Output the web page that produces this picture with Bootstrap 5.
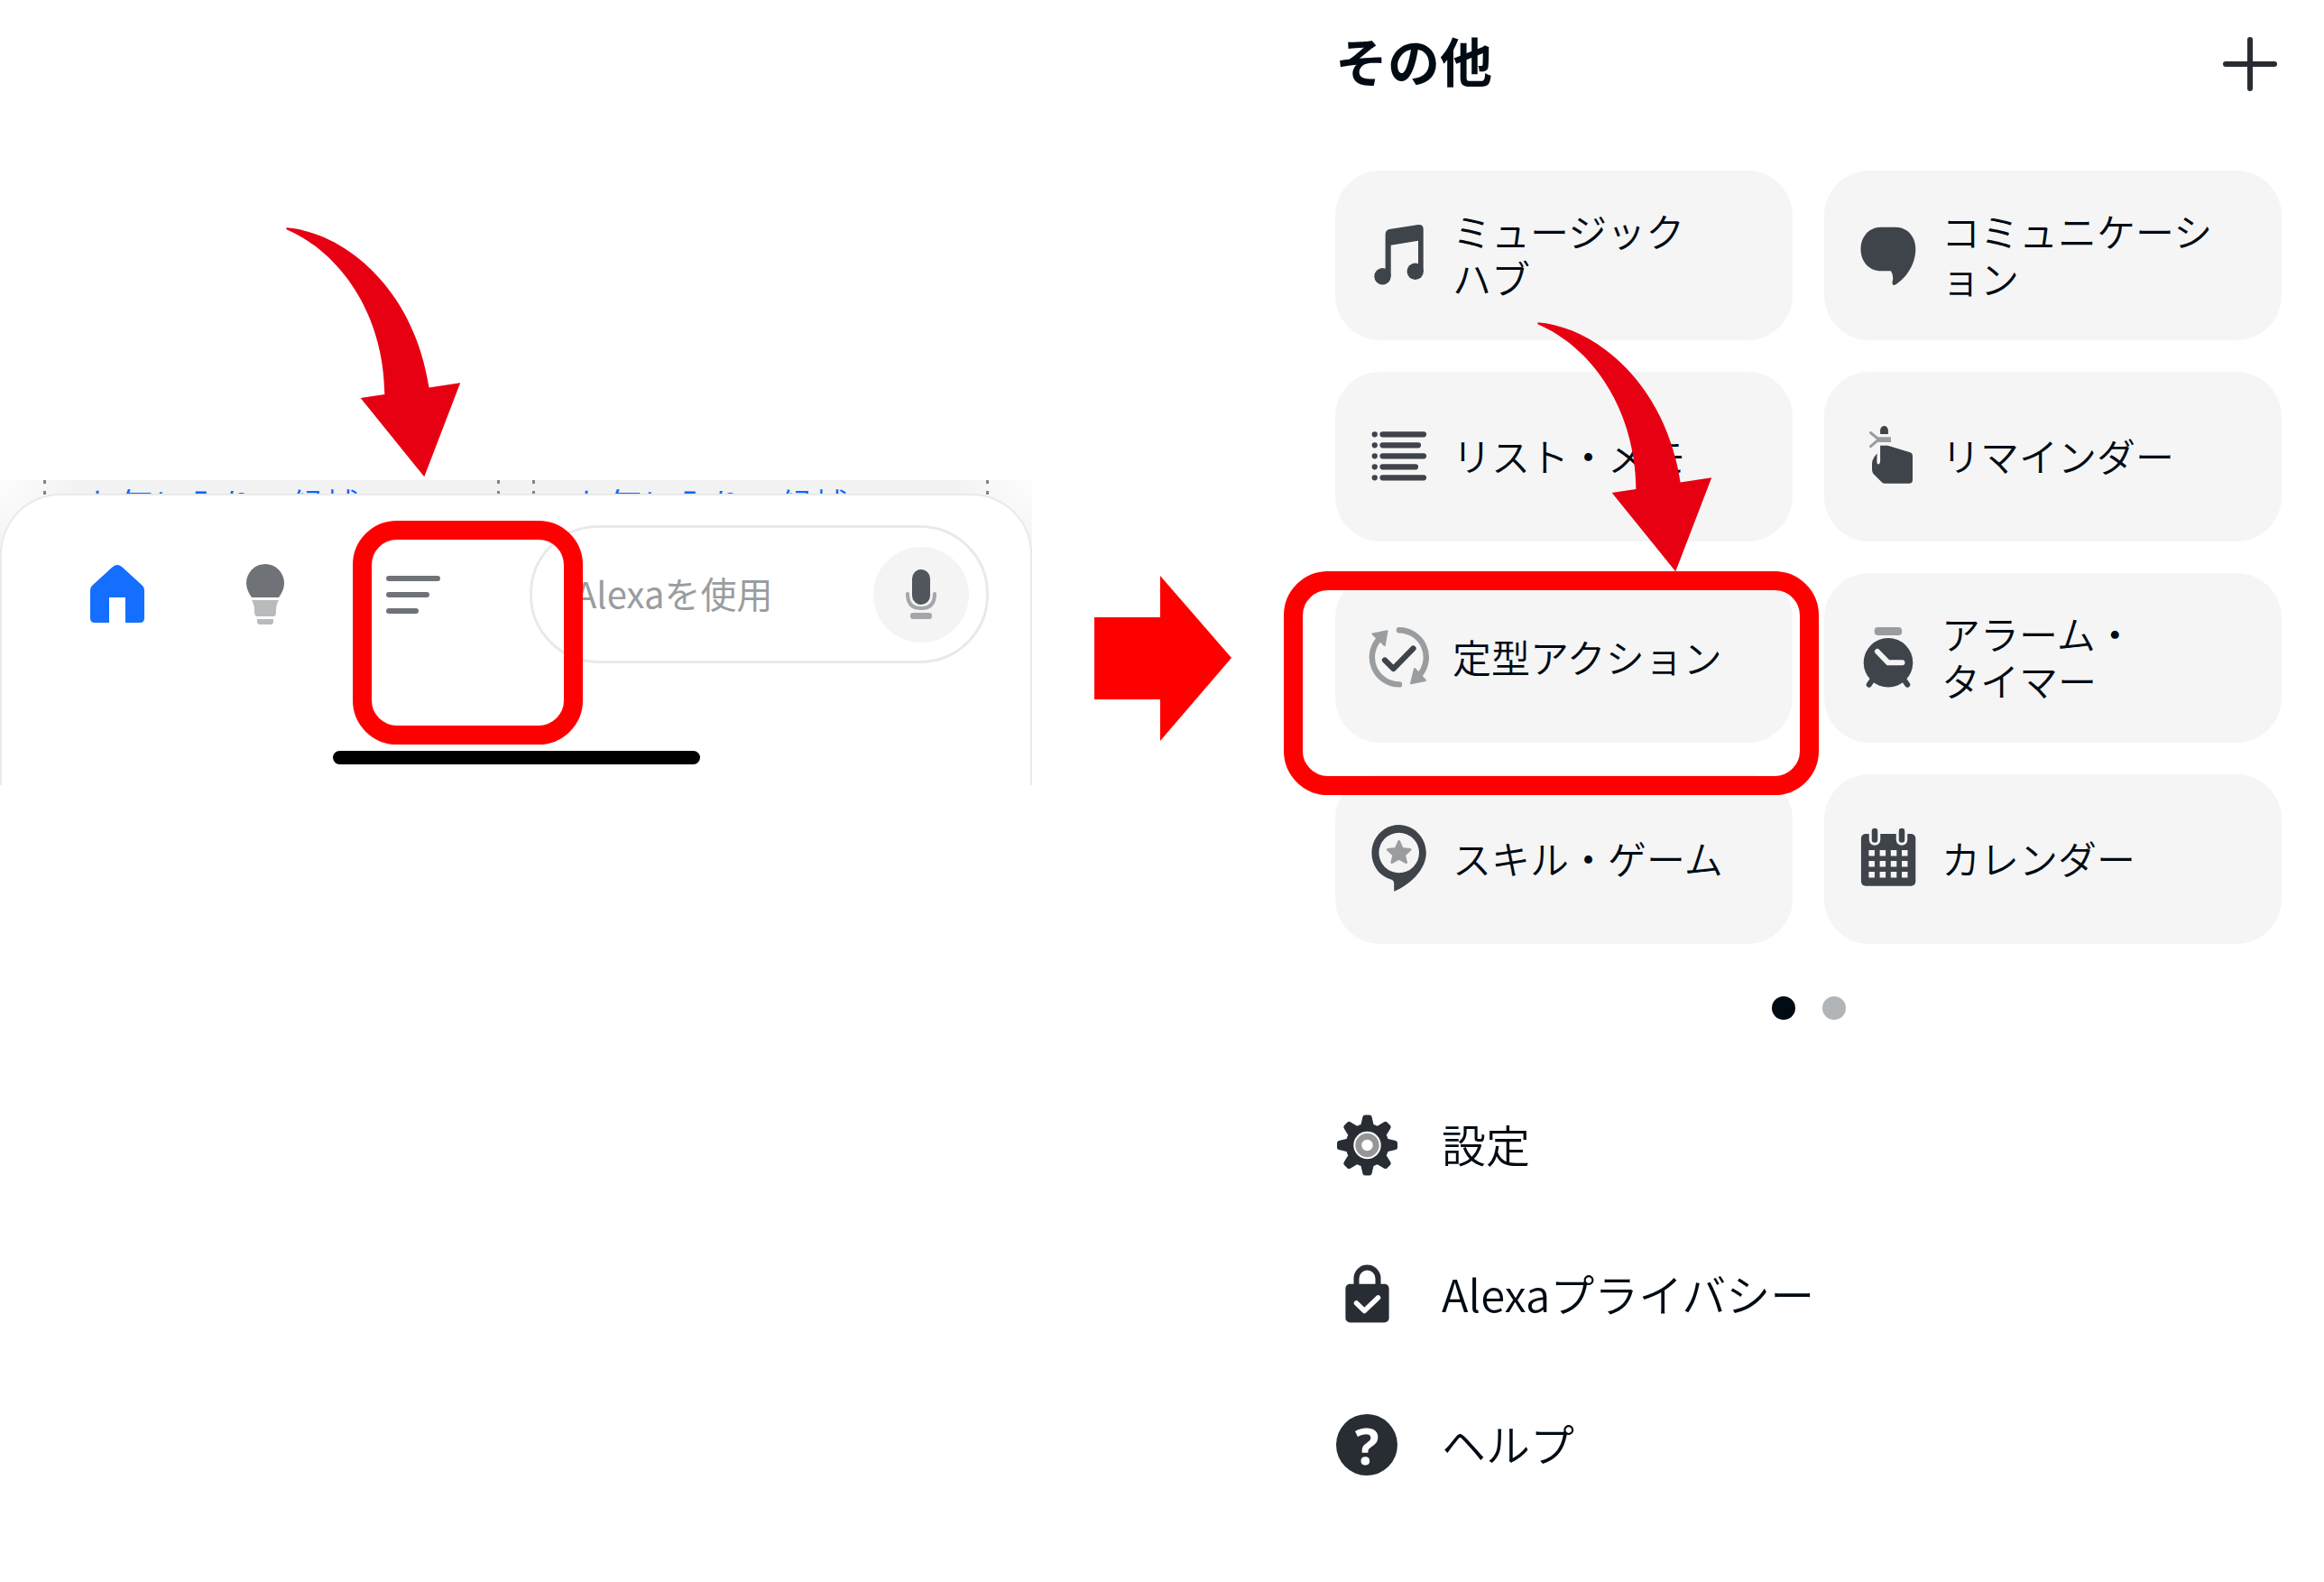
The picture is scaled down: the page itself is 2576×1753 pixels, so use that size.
<!DOCTYPE html>
<html lang="ja">
<head>
<meta charset="utf-8">
<meta name="viewport" content="width=device-width, initial-scale=1">
<title>Alexaアプリ その他メニュー</title>
<link href="https://cdn.jsdelivr.net/npm/bootstrap@5.3.0/dist/css/bootstrap.min.css" rel="stylesheet">
<style>
  body { font-family: "Noto Sans CJK JP", "Noto Sans", sans-serif; font-weight: 350; color: #000b14; background: #fff; overflow-x: hidden; }
  svg { overflow: visible; flex: none; display: block; }
  .guide { display: grid; grid-template-columns: minmax(0, 1144fr) minmax(0, 290fr) minmax(0, 1142fr); }

  /* bottom bar of the app */
  .step-home { padding-top: 532px; }
  .backdrop-cards { height: 82px; overflow: hidden; padding: 0 48px; gap: 36px;
    background: radial-gradient(circle at 0 0, #fdfdfd 0, #f2f2f2 90px, transparent 91px), radial-gradient(circle at 100% 0, #fdfdfd 0, #f2f2f2 90px, transparent 91px), #f2f2f2; }
  .ghost-card { flex: 1 1 0; min-width: 0; padding: 7px 0 0 46px; font-size: 38px; line-height: 38px; color: #0a66ff; white-space: nowrap;
    background: linear-gradient(#808488 4px, transparent 4px) left top / 3px 12px repeat-y, linear-gradient(#808488 4px, transparent 4px) right top / 3px 12px repeat-y; }
  .tab-sheet { margin-top: -67px; height: 323px; padding: 33px 46px 0; background: #fff; border: 2px solid #e8eaea; border-bottom: 0; border-radius: 67px 67px 0 0; }
  .tab-btn { width: 164px; height: 153px; border: 0; background: none; padding: 0; }
  .ask-box { margin-left: 47px; height: 153px; border: 3px solid #e8eaea; border-radius: 76px; padding: 0 19px 0 47px; min-width: 0; }
  .ask-box input { width: 0; border: 0; outline: 0; background: none; font-size: 40px; font-weight: 400; line-height: 60px; min-width: 0; padding: 0 0 4px; }
  .ask-box input::placeholder { color: #999da0; opacity: 1; }
  .mic-btn { width: 106px; height: 106px; background: #f4f4f4; border: 0; padding: 0; flex: none; }
  .home-bar { width: 407px; height: 15px; margin-top: 97px; background: #000; }

  /* red marks */
  .red-frame { position: absolute; border: 21px solid #f00; border-radius: 49px; pointer-events: none; }
  .frame-menu { left: 15px; top: -5px; width: 255px; height: 248px; }
  .frame-routine { left: -57px; right: -29px; top: -2px; height: 248px; }
  .red-swoop { position: absolute; width: 194px; height: 277px; pointer-events: none; }
  .swoop-menu { left: -59px; top: -330px; }
  .swoop-routine { left: 224px; top: -278px; }
  .next-arrow { padding-top: 638px; }

  /* "more" screen */
  .step-more { padding: 0 47px 0 46px; }
  .more-head { height: 141px; margin-bottom: 48px; }
  .more-head h1 { font-size: 58px; line-height: 84px; font-weight: 700; padding-bottom: 10px; }
  .tile-grid { display: grid; grid-template-columns: 1fr 1fr; gap: 35px; }
  .tile { min-height: 188px; padding-left: 36px; gap: 24px; background: #f5f5f5; border-radius: 50px; font-size: 43px; line-height: 52px; color: inherit; white-space: nowrap; }
  .item-label { padding-bottom: 5px; }
  .pager { margin: 58px 0 56px; gap: 30px; }
  .pager button { width: 26px; height: 26px; border: 0; padding: 0; background: #b1b5b8; }
  .pager .current { background: #000b14; }
  .menu-row { height: 166px; gap: 48px; font-size: 49px; line-height: 60px; color: inherit; }
  .help-mark { width: 68px; height: 68px; margin: 0 1px; background: #282d33; color: #fff; font: 700 56px/68px "Noto Sans", sans-serif; }
  .ink { fill: #3f434a; } .ink-line { stroke: #3f434a; fill: none; stroke-linecap: round; stroke-linejoin: round; }
  .ash { fill: #999da0; } .ash-line { stroke: #999da0; fill: none; stroke-linecap: round; stroke-linejoin: round; }
</style>
</head>
<body>
<svg width="0" height="0" class="position-absolute" aria-hidden="true">
  <defs>
    <symbol id="swoop" viewBox="110 92 582 832"><path fill="#e60012" d="M111 93C300 108 535 290 586 625L690 609L570 922L358 660L438 648C436 380 290 175 111 99Z"/></symbol>
    <path id="tooth" d="M28 14L30.5 3.5Q31 1.5 33 1.5H38Q40 1.5 40.5 3.5L43 14Z"/>
  </defs>
</svg>
<main class="guide">
  <section class="step-home">
    <div class="backdrop-cards d-flex">
      <div class="ghost-card">お気に入りの候補</div>
      <div class="ghost-card">お気に入りの候補</div>
    </div>
    <nav class="tab-sheet position-relative">
      <div class="d-flex align-items-center">
        <button class="tab-btn d-flex align-items-center justify-content-center" aria-label="ホーム">
          <svg width="62" height="68" viewBox="0 0 62 68"><path fill="#146eff" d="M1 29Q1 26 3 24L26 3Q31 -1 36 3L59 24Q61 26 61 29V60Q61 65 56 65H40V37H22V65H6Q1 65 1 60Z"/></svg>
        </button>
        <button class="tab-btn d-flex align-items-center justify-content-center" aria-label="デバイス">
          <svg width="42" height="68" viewBox="0 0 42 68"><path fill="#6f7378" d="M6 37Q0 29 0 21A21 21 0 0 1 42 21Q42 29 36 37Z"/><path fill="#b8babc" d="M6 40H36Q33 45 33 52Q33 58 30 58H12Q9 58 9 52Q9 45 6 40ZM12 61H30V64Q30 67 27 67H15Q12 67 12 64Z"/></svg>
        </button>
        <div class="position-relative z-2">
          <button class="tab-btn d-flex align-items-center justify-content-center" aria-label="その他">
            <svg width="60" height="44" viewBox="0 0 60 44"><path stroke="#6f7378" stroke-width="6" stroke-linecap="round" d="M3 4H57M3 22H45M3 40H33"/></svg>
          </button>
          <div class="red-frame frame-menu"></div>
          <svg class="red-swoop swoop-menu"><use href="#swoop"/></svg>
        </div>
        <div class="ask-box flex-fill d-flex align-items-center">
          <input class="flex-fill" type="text" aria-label="Alexaを使用" placeholder="Alexaを使用">
          <button class="mic-btn rounded-circle d-flex align-items-center justify-content-center" aria-label="音声入力">
            <svg width="34" height="56" viewBox="0 0 34 56"><rect x="7" y="0" width="20" height="39" rx="10" fill="#52565d"/><path d="M2 27Q2 43 17 43T32 27" fill="none" stroke="#a4a6aa" stroke-width="4" stroke-linecap="round"/><rect x="5" y="48" width="24" height="7" rx="3" fill="#a4a6aa"/></svg>
          </button>
        </div>
      </div>
      <div class="home-bar rounded-pill mx-auto"></div>
    </nav>
  </section>

  <div class="next-arrow d-flex justify-content-center">
    <svg width="152" height="183" viewBox="0 0 152 183"><path fill="#f00" d="M0 46H73V0L152 91L73 183V137H0Z"/></svg>
  </div>

  <section class="step-more">
    <header class="more-head d-flex align-items-center justify-content-between">
      <h1 class="m-0">その他</h1>
      <button class="btn border-0 p-0 me-1" aria-label="追加">
        <svg width="62" height="60" viewBox="0 0 62 60"><path stroke="#282d33" stroke-width="6" stroke-linecap="round" d="M31 3V57M4 30H58"/></svg>
      </button>
    </header>

    <div class="tile-grid">
      <a href="#" class="tile d-flex align-items-center text-decoration-none">
        <svg width="70" height="70" viewBox="0 0 70 70" class="ink"><path d="M19.600 58V12Q19.600 7 24 6L56 1Q61.700 .5 61.700 6V53H56V18.700L25.700 23.700V58Z"/><circle cx="16.500" cy="58.300" r="9.200"/><circle cx="52.700" cy="52.700" r="9.200"/></svg>
        <span class="item-label">ミュージック<br>ハブ</span>
      </a>
      <a href="#" class="tile d-flex align-items-center text-decoration-none">
        <svg width="70" height="70" viewBox="0 0 70 70" class="ink"><path d="M27 3.700H43C56 3.700 65.300 14 65.300 28C65.300 45 55 60 43 67.500Q39 69 39.500 65Q41.500 58 38 52.300H27C14 52.300 4.500 42 4.500 28S14 3.700 27 3.700Z"/></svg>
        <span class="item-label">コミュニケーシ<br>ョン</span>
      </a>
      <a href="#" class="tile d-flex align-items-center text-decoration-none">
        <svg width="70" height="70" viewBox="0 0 70 70"><path class="ink-line" stroke-width="6.200" d="M7.700 10.300h.1M16.500 10.300H62M7.700 22.300h.1M16.500 22.300H56M7.700 34.300h.1M16.500 34.300H62M7.700 46.300h.1M16.500 46.300H53M7.700 58.300h.1M16.500 58.300H62"/></svg>
        <span class="item-label">リスト・メモ</span>
      </a>
      <a href="#" class="tile d-flex align-items-center text-decoration-none">
        <svg width="70" height="70" viewBox="0 0 70 70"><path class="ink" d="M26.100 10V5.500A4.400 4.400 0 0 1 34.900 5.500V10ZM26.100 22.700H34.500L60 30.500Q62 31.500 62 34V60.700Q62 64.700 58 64.700H31Q29 64.700 27 62.500L18.500 54Q17 52 17 49V43Q17 37 22.700 31.500L22.300 40Q22.500 44 24.500 43.500Q26.100 43 26.100 40Z"/><path class="ash" d="M24 13.300H38V19H24Z"/><path class="ash-line" stroke-width="3" d="M15.500 8.500L24.500 16L15.500 23.700"/></svg>
        <span class="item-label">リマインダー</span>
      </a>
      <div class="position-relative z-1">
        <a href="#" class="tile d-flex align-items-center text-decoration-none">
          <svg width="70" height="70" viewBox="0 0 70 70"><path class="ash-line" stroke-width="6.400" d="M34.900 4.200A30.100 30.100 0 0 1 57 54.500M35 64.400A30.100 30.100 0 0 1 13.500 13.200"/><path class="ash-line" style="fill:#999da0" stroke-width="2" d="M21.500 5.300L5.500 8.500L18.700 21ZM52 47L48 63.300L64 60Z"/><path class="ink-line" stroke-width="6.200" d="M19 37.500L28.500 47L50.500 24.500"/></svg>
          <span class="item-label">定型アクション</span>
        </a>
        <div class="red-frame frame-routine"></div>
        <svg class="red-swoop swoop-routine"><use href="#swoop"/></svg>
      </div>
      <a href="#" class="tile d-flex align-items-center text-decoration-none">
        <svg width="70" height="70" viewBox="0 0 70 70"><rect class="ash" x="19.700" y="1" width="30.500" height="9" rx="4"/><path class="ink-line" stroke-width="6" d="M19 57L13.700 64.700M51 57L56.300 64.700"/><circle class="ink" cx="35" cy="40.300" r="27.300"/><path fill="none" stroke="#f4f4f4" stroke-width="6" stroke-linecap="round" stroke-linejoin="round" d="M23 28L35 40.300H50.500"/></svg>
        <span class="item-label">アラーム・<br>タイマー</span>
      </a>
      <a href="#" class="tile d-flex align-items-center text-decoration-none">
        <svg width="70" height="70" viewBox="0 0 70 70"><path class="ink" d="M34.600 -3C51 -3 64.800 11 64.800 28C64.800 46 48 63 29.200 70.700V62Q29.200 58.500 26 57.500C13 54 4.400 42 4.400 28C4.400 11 18 -3 34.600 -3Z"/><circle cx="34.700" cy="28" r="22.300" fill="#f4f4f4"/><path class="ash-line" style="fill:#999da0" stroke-width="3" d="M34.700 15.500L38.200 23.500L47 24.500L40.500 30.300L42.500 38.500L34.700 34.300L26.900 38.500L28.900 30.300L22.400 24.500L31.200 23.500Z"/></svg>
        <span class="item-label">スキル・ゲーム</span>
      </a>
      <a href="#" class="tile d-flex align-items-center text-decoration-none">
        <svg width="70" height="70" viewBox="0 0 70 70"><rect class="ink" x="4.900" y="7" width="60.400" height="57.700" rx="5"/><path stroke="#f4f4f4" stroke-width="12.500" stroke-linecap="round" d="M20 3V13.500M50 3V13.500"/><path class="ink-line" stroke-width="6.500" d="M20 4V13.500M50 4V13.500"/><path fill="none" stroke="#f4f4f4" stroke-width="6.500" stroke-dasharray="6.500 5.700" d="M13.400 28.300H57M13.400 40.300H57M13.400 52.300H57"/></svg>
        <span class="item-label">カレンダー</span>
      </a>
    </div>

    <div class="pager d-flex justify-content-center">
      <button class="current rounded-circle" aria-label="1ページ"></button>
      <button class="rounded-circle" aria-label="2ページ"></button>
    </div>

    <nav>
      <a href="#" class="menu-row d-flex align-items-center text-decoration-none">
        <svg width="70" height="70" viewBox="0 0 70 70" fill="#282d33"><circle cx="35.500" cy="35" r="24"/><use href="#tooth"/><use href="#tooth" transform="rotate(45 35.500 35)"/><use href="#tooth" transform="rotate(90 35.500 35)"/><use href="#tooth" transform="rotate(135 35.500 35)"/><use href="#tooth" transform="rotate(180 35.500 35)"/><use href="#tooth" transform="rotate(225 35.500 35)"/><use href="#tooth" transform="rotate(270 35.500 35)"/><use href="#tooth" transform="rotate(315 35.500 35)"/><circle cx="35.500" cy="35" r="15.200" fill="#fff"/><circle cx="35.500" cy="35" r="9.700" fill="none" stroke="#949698" stroke-width="7"/></svg>
        <span class="item-label">設定</span>
      </a>
      <a href="#" class="menu-row d-flex align-items-center text-decoration-none">
        <svg width="70" height="70" viewBox="0 0 70 70"><rect x="11.400" y="22.800" width="48.200" height="42.700" rx="5" fill="#282d33"/><path fill="none" stroke="#282d33" stroke-width="6" d="M23.500 25V16.500a12 12 0 0 1 24 0V25"/><path fill="none" stroke="#fff" stroke-width="5.500" stroke-linecap="round" stroke-linejoin="round" d="M23.500 44L32.300 52.500L47.500 38"/></svg>
        <span class="item-label">Alexaプライバシー</span>
      </a>
      <a href="#" class="menu-row d-flex align-items-center text-decoration-none">
        <span class="help-mark rounded-circle text-center" aria-hidden="true">?</span>
        <span class="item-label">ヘルプ</span>
      </a>
    </nav>
  </section>
</main>
<script src="https://cdn.jsdelivr.net/npm/bootstrap@5.3.0/dist/js/bootstrap.bundle.min.js"></script>
</body>
</html>
